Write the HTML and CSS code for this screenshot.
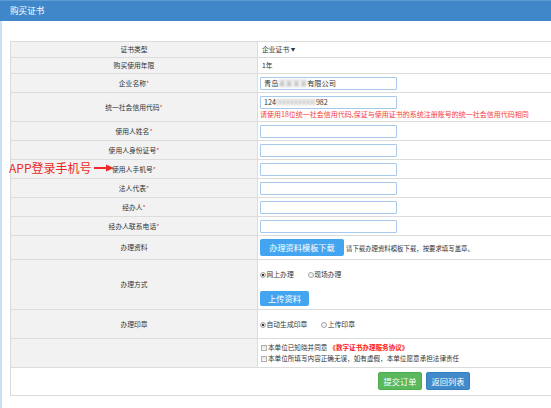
FILE: index.html
```html
<!DOCTYPE html>
<html lang="zh-CN">
<head>
<meta charset="utf-8">
<title>购买证书</title>
<link rel="stylesheet" href="styles.css">
</head>
<body>
<div class="page">
  <header class="panel-head">购买证书</header>
  <main class="panel-body">
    <div class="form">
      <div class="row r-text">
        <div class="lab">证书类型</div>
        <div class="val"><span class="select">企业证书 <span class="caret">▼</span></span></div>
      </div>
      <div class="row r-text">
        <div class="lab">购买使用年限</div>
        <div class="val">1年</div>
      </div>
      <div class="row r-input">
        <div class="lab"><span>企业名称<i class="req">*</i></span></div>
        <div class="val"><div class="field">青岛<span class="blur">某某某某</span>有限公司</div></div>
      </div>
      <div class="row r-code">
        <div class="lab"><span>统一社会信用代码<i class="req">*</i></span></div>
        <div class="val">
          <div class="field">124<span class="blur">0000000000</span>982</div>
          <div class="note">请使用18位统一社会信用代码,保证与使用证书的系统注册账号的统一社会信用代码相同</div>
        </div>
      </div>
      <div class="row r-input">
        <div class="lab"><span>使用人姓名<i class="req">*</i></span></div>
        <div class="val"><input class="field" type="text"></div>
      </div>
      <div class="row r-input">
        <div class="lab"><span>使用人身份证号<i class="req">*</i></span></div>
        <div class="val"><input class="field" type="text"></div>
      </div>
      <div class="row r-input">
        <div class="lab"><span>使用人手机号<i class="req">*</i></span></div>
        <div class="val"><input class="field" type="text"></div>
      </div>
      <div class="row r-input">
        <div class="lab"><span>法人代表<i class="req">*</i></span></div>
        <div class="val"><input class="field" type="text"></div>
      </div>
      <div class="row r-input">
        <div class="lab"><span>经办人<i class="req">*</i></span></div>
        <div class="val"><input class="field" type="text"></div>
      </div>
      <div class="row r-input">
        <div class="lab"><span>经办人联系电话<i class="req">*</i></span></div>
        <div class="val"><input class="field" type="text"></div>
      </div>
      <div class="row r-file">
        <div class="lab">办理资料</div>
        <div class="val">
          <span class="btn btn-dl">办理资料模板下载</span>
          <span class="hint">请下载办理资料模板下载，按要求填写盖章。</span>
        </div>
      </div>
      <div class="row r-mode">
        <div class="lab">办理方式</div>
        <div class="val">
          <div class="opts">
            <span class="opt"><span class="radio on"></span>网上办理</span>
            <span class="opt"><span class="radio"></span>现场办理</span>
          </div>
          <span class="btn btn-up">上传资料</span>
        </div>
      </div>
      <div class="row r-seal">
        <div class="lab">办理印章</div>
        <div class="val">
          <div class="opts">
            <span class="opt"><span class="radio on"></span>自动生成印章</span>
            <span class="opt"><span class="radio"></span>上传印章</span>
          </div>
        </div>
      </div>
      <div class="row r-agree">
        <div class="lab"></div>
        <div class="val">
          <div class="check-line"><span class="checkbox"></span>本单位已知晓并同意 <b class="agreement">《数字证书办理服务协议》</b></div>
          <div class="check-line"><span class="checkbox"></span>本单位所填写内容正确无误，如有虚假，本单位愿意承担法律责任</div>
        </div>
      </div>
      <div class="actions">
        <span class="btn btn-submit">提交订单</span>
        <span class="btn btn-back">返回列表</span>
      </div>
    </div>
  </main>
  <div class="annotation">
    <span class="annotation-text">APP登录手机号</span>
    <svg class="arrow" width="20" height="8" viewBox="0 0 20 8"><line x1="0" y1="4" x2="13" y2="4" stroke="#ee2a24" stroke-width="2"/><polygon points="12,0.5 20,4 12,7.5" fill="#ee2a24"/></svg>
  </div>
</div>
</body>
</html>
```
FILE: styles.css
```css
html, body {
  margin: 0;
  padding: 0;
  overflow: hidden;
  background: #fff;
}
body {
  font-family: "Noto Sans CJK SC", "Microsoft YaHei", sans-serif;
  color: #333;
  font-size: 6.8px;
}
.page {
  width: 860px;
  height: 408px;
  position: relative;
}
.panel-head {
  height: 21px;
  line-height: 21px;
  background: #3f87c8;
  box-shadow: inset 0 1px 0 #5c9bd4;
  color: #fff;
  font-size: 8.6px;
  padding-left: 10px;
}
.panel-body {
  display: block;
  border-left: 2px solid #c9e0f5;
  padding: 20px 0 20px 8px;
  height: 387px;
  box-sizing: border-box;
}
.form {
  width: 828px;
  box-sizing: border-box;
  border: 1px solid #dcdcdc;
}
.row {
  display: grid;
  grid-template-columns: 247px 1fr;
  border-bottom: 1px solid #dcdcdc;
}
.lab {
  background: #f2f2f2;
  border-right: 1px solid #dcdcdc;
  display: flex;
  align-items: center;
  justify-content: center;
  line-height: 11px;
}
.req {
  font-style: normal;
  color: #e4393c;
}
.val {
  line-height: 11px;
  padding-left: 2px;
}
.r-text .val { padding: 2px 0 2px 4px; }
.r-input .val { padding: 3px 0 2px 2px; }
.r-code .val { padding: 3px 0 2px 2px; }
.r-file .val {
  padding: 3px 0 3px 2px;
  display: flex;
  align-items: center;
}
.r-mode .val { padding: 9px 0 3px 2px; }
.r-seal .val { padding: 9px 0 8px 2px; }
.r-agree .val { padding: 3px 0 3px 3px; }

.select .caret {
  font-size: 4.5px;
  vertical-align: 1px;
}
.field {
  display: block;
  width: 137px;
  height: 13px;
  box-sizing: border-box;
  border: 1px solid #a9c9ec;
  border-radius: 1px;
  padding: 0 3px;
  margin: 0;
  font: inherit;
  font-size: 7.2px;
  line-height: 11px;
  color: #333;
  background: #fff;
  outline: none;
  white-space: nowrap;
  overflow: hidden;
}
.blur {
  color: #9a9a9a;
  filter: blur(1.3px);
}
.note {
  color: #f53a3a;
  font-size: 7px;
  line-height: 10px;
  white-space: nowrap;
}
.btn {
  display: inline-block;
  color: #fff;
  text-align: center;
  border-radius: 2px;
  font-size: 8.2px;
  box-sizing: border-box;
  white-space: nowrap;
}
.btn-dl {
  width: 84px;
  height: 17px;
  line-height: 17px;
  background: #43a5f0;
}
.hint {
  font-size: 6.4px;
  margin-left: 2px;
  padding-top: 2px;
  white-space: nowrap;
}
.opts {
  display: flex;
  height: 11px;
  align-items: center;
}
.opt {
  display: inline-flex;
  align-items: center;
  margin-right: 14px;
}
.radio {
  width: 6px;
  height: 6px;
  box-sizing: border-box;
  border: 1px solid #a8a8a8;
  border-radius: 50%;
  background: #f3f3f3;
  margin-right: 0.5px;
}
.radio.on {
  background: radial-gradient(circle, #3a3a3a 0 1.2px, #e8e8e8 1.6px);
}
.btn-up {
  display: block;
  width: 49px;
  height: 15px;
  line-height: 15px;
  margin-top: 11px;
  background: #43a5f0;
}
.check-line {
  display: flex;
  align-items: center;
  height: 11px;
  white-space: nowrap;
  font-size: 6.6px;
}
.checkbox {
  width: 6px;
  height: 6px;
  box-sizing: border-box;
  border: 1px solid #b0b0b0;
  background: linear-gradient(#e6e6e6, #fafafa);
  margin-right: 1px;
}
.agreement {
  color: #ff1a1a;
  margin-left: 2px;
}
.actions {
  display: flex;
  justify-content: center;
  gap: 4px;
  padding: 4px 0 5px;
  background: #fff;
}
.btn-submit,
.btn-back {
  width: 44px;
  height: 18px;
  line-height: 16px;
  border: 1px solid;
}
.btn-submit {
  background: #5cb85c;
  border-color: #4cae4c;
}
.btn-back {
  background: #428bca;
  border-color: #357ebd;
}
.annotation {
  position: absolute;
  left: 9px;
  top: 161px;
  display: flex;
  align-items: center;
  gap: 2px;
  height: 14px;
}
.annotation-text {
  color: #ee2a24;
  font-size: 12px;
  line-height: 14px;
  white-space: nowrap;
}
.arrow {
  display: block;
}
```
